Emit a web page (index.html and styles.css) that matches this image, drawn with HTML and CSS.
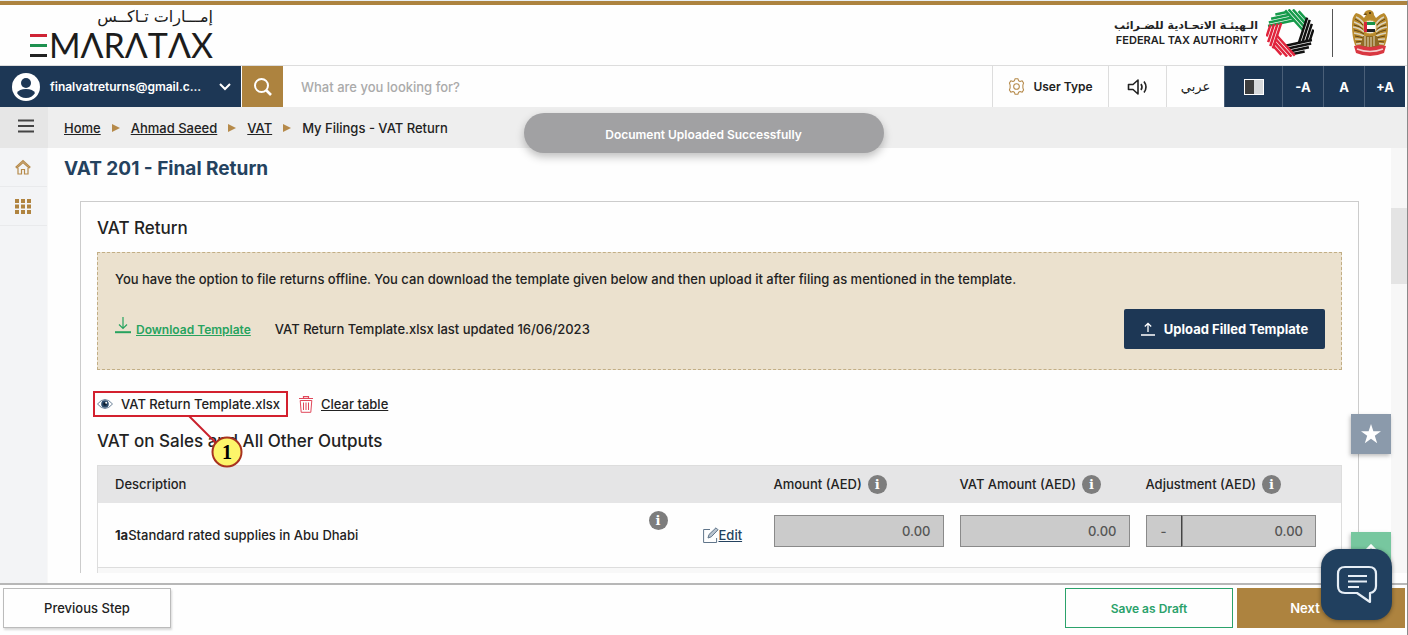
FILE: index.html
```html
<!DOCTYPE html>
<html lang="en">

<head>
    <meta charset="UTF-8">
    <meta name="viewport" content="width=device-width, initial-scale=1.0">
    <title>EmaraTax - VAT 201 Final Return</title>
    <link rel="stylesheet" href="styles.css">
</head>

<body>
    <header class="header">
        <div class="brand">
            <span class="brand-ar" lang="ar" dir="rtl">إمـــارات تـاكــس</span>
            <div class="brand-en">
                <span class="brand-bars"><i class="red"></i><i class="green"></i><i class="black"></i></span>
                <span>MΛRΛTΛX</span>
            </div>
        </div>

        <div class="authority">
            <div class="authority-name">
                <span class="authority-ar" lang="ar" dir="rtl">الـهيئـة الاتحـادية للضـرائب</span>
                <span class="authority-en">FEDERAL TAX AUTHORITY</span>
            </div>
            <svg class="fta-logo" width="48" height="48" viewBox="-24 -24 48 48" aria-hidden="true">
                <defs>
                    <path id="band" d="M-20 -11.5H7M-18.500 -14.700H5.200M-15.500 -17.900H3.400M-10.500 -21.100H1.600" fill="none" stroke-width="2.500"/>
                </defs>
                <g transform="rotate(-12)">
                    <use href="#band" stroke="#169b4b"/>
                    <use href="#band" stroke="#169b4b" transform="rotate(60)"/>
                    <use href="#band" stroke="#111" transform="rotate(120)"/>
                    <use href="#band" stroke="#111" transform="rotate(180)"/>
                    <use href="#band" stroke="#e0243c" transform="rotate(240)"/>
                    <use href="#band" stroke="#e0243c" transform="rotate(300)"/>
                </g>
            </svg>
            <span class="divider"></span>
            <svg class="emblem" width="38" height="48" viewBox="0 0 38 48" aria-hidden="true">
                <path d="M13 5q1-4 6-4q4 1 4 5l2 3q4-4 8-5q4 3 4 12q0 12-3 20l-5 5H9l-5-5Q1 28 1 16Q1 7 5 4q5 1 8 5l2-3z" fill="#b98a2c"/>
                <path d="M5 8q5 2 8 7M3 13q6 2 10 6M2 18q7 1 11 5M3 24q6 1 10 3M4 30q5 0 10 1M5 35q5-1 9 0M33 8q-5 2-8 7M35 13q-6 2-10 6M36 18q-7 1-11 5M35 24q-6 1-10 3M34 30q-5 0-10 1M33 35q-5-1-9 0" fill="none" stroke="#d9d2bd" stroke-width="1.500"/>
                <path d="M4 10q5 2 9 7M3 16q6 1 10 5M3 21q6 1 10 4M4 27q5 1 9 2M5 33q4-1 8 0M34 10q-5 2-9 7M35 16q-6 1-10 5M35 21q-6 1-10 4M34 27q-5 1-9 2M33 33q-4-1-8 0" fill="none" stroke="#5f4619" stroke-width="1"/>
                <path d="M12 27h14l3 11H9z" fill="#8f6b25"/>
                <path d="M14 27v10M17 28v10M20 28v10M23 27v10" stroke="#e5dcc1" stroke-width="1"/>
                <circle cx="19" cy="18" r="7" fill="#efe9da" stroke="#c59a3d"/>
                <path d="M14 13h10v3H14z" fill="#16934a"/>
                <path d="M14 16h10v4H14z" fill="#fff"/>
                <path d="M14 20h10v3H14z" fill="#222"/>
                <path d="M13 13h3v10h-3z" fill="#d6253a"/>
                <path d="M3 37l5-1q11 4 22 0l5 1-2 7q-14 6-28 0z" fill="#d93741"/>
                <path d="M6 40q13 5 26 0" fill="none" stroke="#f4cfcf" stroke-width="1.400"/>
                <circle cx="19" cy="4" r="1" fill="#3b2a0c"/>
                <path d="M15 4l-3 2 4 0z" fill="#6b4c14"/>
            </svg>
        </div>
    </header>

    <div class="toolbar">
        <button type="button" class="account">
            <svg width="28" height="28" viewBox="0 0 28 28" aria-hidden="true">
                <circle cx="14" cy="14" r="14" fill="#fff"/>
                <circle cx="14" cy="10" r="5" fill="#1d3755"/>
                <path d="M5 20q2-4 9-4t9 4q-3 5-9 5t-9-5z" fill="#1d3755"/>
            </svg>
            <span class="account-name">finalvatreturns@gmail.c...</span>
            <svg width="12" height="8" viewBox="0 0 12 8" aria-hidden="true"><path d="M1 1l5 5 5-5" fill="none" stroke="#fff" stroke-width="2"/></svg>
        </button>
        <button type="button" class="search-button" aria-label="Search">
            <svg width="20" height="20" viewBox="0 0 20 20" aria-hidden="true"><circle cx="8.500" cy="8.500" r="6.500" fill="none" stroke="#fff" stroke-width="2"/><path d="M13 13l5 5" stroke="#fff" stroke-width="2.600"/></svg>
        </button>
        <input type="search" class="search-input" placeholder="What are you looking for?" aria-label="What are you looking for?">
        <button type="button" class="tool user-type">
            <svg width="17" height="17" viewBox="0 0 24 24" fill="none" stroke="#b68a4a" stroke-width="1.500" aria-hidden="true">
                <path d="M10 1h4l1 3 2 1 3-1 2 3-1 3v4l1 3-2 3-3-1-2 1-1 3h-4l-1-3-2-1-3 1-2-3 1-3v-4l-1-3 2-3 3 1 2-1z" stroke-linejoin="round"/>
                <circle cx="12" cy="12" r="4"/>
            </svg>
            User Type
        </button>
        <button type="button" class="tool tool-icon" aria-label="Read aloud">
            <svg width="22" height="18" viewBox="0 0 22 18" fill="none" stroke="#222" stroke-width="1.600" aria-hidden="true">
                <path d="M1.500 6.500H6L11 2v14l-5-4.500H1.500z" stroke-linejoin="round"/>
                <path d="M14 6q2 3 0 6M17 3.500q4 5.500 0 11"/>
            </svg>
        </button>
        <button type="button" class="tool tool-icon arabic" lang="ar">عربي</button>
        <button type="button" class="tool tool-icon dark" aria-label="Contrast">
            <svg width="20" height="16" viewBox="0 0 20 16" aria-hidden="true"><path d="M0 0h20v16H0z" fill="#fff"/><path d="M1 1h9v14H1z" fill="#3d3d3d"/><path d="M10 1h9v14h-9z" fill="#d7d9db"/></svg>
        </button>
        <button type="button" class="tool dark size">-A</button>
        <button type="button" class="tool dark size">A</button>
        <button type="button" class="tool dark size">+A</button>
    </div>

    <div class="crumb-bar">
        <button type="button" class="menu-button" aria-label="Menu">
            <svg width="16" height="14" viewBox="0 0 16 14" aria-hidden="true"><path d="M0 1.500h16M0 7h16M0 12.500h16" stroke="#444" stroke-width="2"/></svg>
        </button>
        <nav class="crumbs" aria-label="Breadcrumb">
            <a href="#">Home</a>
            <span class="arrow"></span>
            <a href="#">Ahmad Saeed</a>
            <span class="arrow"></span>
            <a href="#">VAT</a>
            <span class="arrow"></span>
            <span>My Filings - VAT Return</span>
        </nav>
        <div class="toast" role="status">Document Uploaded Successfully</div>
    </div>

    <div class="layout">
        <nav class="sidebar" aria-label="Main">
            <a href="#" aria-label="Home">
                <svg width="16" height="16" viewBox="0 0 16 16" fill="none" stroke="#b68a4a" stroke-width="1.200" aria-hidden="true">
                    <path d="M1 8l7-6.500L15 8l-1 1-6-5.500L2 9z"/>
                    <path d="M3 9v6h3.500v-4.500h3V15H13V9"/>
                </svg>
            </a>
            <a href="#" aria-label="Services">
                <svg width="16" height="16" viewBox="0 0 16 16" fill="#b08440" aria-hidden="true">
                    <path d="M0 1h4v4H0zM6 1h4v4H6zM12 1h4v4h-4zM0 6.500h4v4H0zM6 6.500h4v4H6zM12 6.500h4v4h-4zM0 12h4v4H0zM6 12h4v4H6zM12 12h4v4h-4z"/>
                </svg>
            </a>
        </nav>

        <main class="content">
            <h1>VAT 201 - Final Return</h1>
            <section class="panel">
                <h2>VAT Return</h2>
                <div class="offline">
                    <p>You have the option to file returns offline. You can download the template given below and then upload it after filing as mentioned in the template.</p>
                    <div class="offline-row">
                        <a href="#" class="download">
                            <svg width="16" height="17" viewBox="0 0 16 17" fill="none" stroke="#27a35f" aria-hidden="true"><path d="M8 0v11M4 7.500L8 11.500l4-4" stroke-width="1.200"/><path d="M0 15.200h16" stroke-width="2"/></svg>
                            <span>Download Template</span>
                        </a>
                        <span class="updated">VAT Return Template.xlsx last updated 16/06/2023</span>
                        <button type="button" class="upload">
                            <svg width="14" height="14" viewBox="0 0 14 14" fill="none" stroke="#fff" stroke-width="1.300" aria-hidden="true"><path d="M7 10V1.500M3.800 4.500L7 1.300l3.200 3.200M0 13h14"/></svg>
                            Upload Filled Template
                        </button>
                    </div>
                </div>

                <div class="file-row">
                    <a href="#" class="file">
                        <svg width="16" height="12" viewBox="0 0 16 12" aria-hidden="true"><path d="M.5 6Q8-3 15.500 6Q8 15 .5 6z" fill="#fff" stroke="#6d8299"/><circle cx="8" cy="6" r="3.800" fill="#2b4a6b"/><circle cx="8" cy="6" r="1.800" fill="#0d1d2e"/><circle cx="9.200" cy="4.800" r="1" fill="#fff"/></svg>
                        VAT Return Template.xlsx
                        <svg class="marker" width="64" height="54" viewBox="0 0 64 54" aria-hidden="true">
                            <path d="M4 1l30 30" stroke="#c9202c" stroke-width="2"/>
                            <circle cx="42" cy="37" r="14.500" fill="#fdf56a" stroke="#a8321f" stroke-width="2"/>
                            <text x="42" y="44" text-anchor="middle" class="marker-number">1</text>
                        </svg>
                    </a>
                    <a href="#" class="clear">
                        <svg width="14" height="17" viewBox="0 0 14 17" fill="none" stroke="#e0475a" aria-hidden="true"><path d="M0 2.500h14M4.500 2V.6h5V2" stroke-width="1.200"/><path d="M1.200 4.500h11.600l-1 11.800H2.200zM4.500 6.500v7.500M7 6.500v7.500M9.500 6.500v7.500"/></svg>
                        <span>Clear table</span>
                    </a>
                </div>

                <h2>VAT on Sales and All Other Outputs</h2>
                <table class="returns">
                    <thead>
                        <tr>
                            <th scope="col">Description</th>
                            <th class="col-info"></th>
                            <th class="col-edit"></th>
                            <th scope="col" class="col-amount"><span class="head">Amount (AED) <button type="button" class="info" aria-label="About amount">i</button></span></th>
                            <th scope="col" class="col-amount"><span class="head">VAT Amount (AED) <button type="button" class="info" aria-label="About VAT amount">i</button></span></th>
                            <th scope="col" class="col-adjust"><span class="head">Adjustment (AED) <button type="button" class="info" aria-label="About adjustment">i</button></span></th>
                        </tr>
                    </thead>
                    <tbody>
                        <tr>
                            <td><div class="description"><b>1a</b>Standard rated supplies in Abu Dhabi</div></td>
                            <td class="cell-info"><button type="button" class="info" aria-label="About this row">i</button></td>
                            <td>
                                <a href="#" class="edit">
                                    <svg width="16" height="16" viewBox="0 0 16 16" fill="none" stroke="#60758a" aria-hidden="true"><path d="M7 2.500H.6v13h13V11"/><path d="M5 11l1-3.500L13 .8l2 2L8.300 9.800z" fill="#b9c3cd"/></svg><span>Edit</span>
                                </a>
                            </td>
                            <td class="cell-amount"><input type="text" class="amount" value="0.00" aria-label="Amount (AED)" readonly></td>
                            <td class="cell-amount"><input type="text" class="amount" value="0.00" aria-label="VAT Amount (AED)" readonly></td>
                            <td class="cell-amount cell-adjust">
                                <div class="adjust">
                                    <input type="text" class="amount sign" value="-" aria-label="Adjustment sign" readonly>
                                    <input type="text" class="amount" value="0.00" aria-label="Adjustment (AED)" readonly>
                                </div>
                            </td>
                        </tr>
                        <tr class="next-row"><td colspan="6"></td></tr>
                    </tbody>
                </table>
            </section>
        </main>

        <div class="scroll-track"><div class="scroll-thumb"></div></div>
    </div>

    <footer class="footer">
        <button type="button" class="step previous">Previous Step</button>
        <button type="button" class="step draft">Save as Draft</button>
        <button type="button" class="step next">Next Step</button>
    </footer>

    <button type="button" class="float favourite" aria-label="Favourites">
        <svg width="20" height="20" viewBox="0 0 20 20" aria-hidden="true"><path d="M10 0l2.400 7.200H20l-6.200 4.500 2.400 7.500L10 14.700l-6.200 4.500 2.400-7.500L0 7.200h7.600z" fill="#fff"/></svg>
    </button>
    <button type="button" class="float to-top" aria-label="Back to top">
        <svg width="14" height="9" viewBox="0 0 14 9" aria-hidden="true"><path d="M1 8l6-6 6 6" fill="none" stroke="#fff" stroke-width="3"/></svg>
    </button>
    <button type="button" class="chat" aria-label="Chat">
        <svg width="42" height="40" viewBox="0 0 42 40" fill="none" stroke="#e6eef6" stroke-width="2.200" stroke-linejoin="round" aria-hidden="true">
            <path d="M9 2h24q7 0 7 7v12q0 6-6 7v9l-13-9H9q-7 0-7-7V9q0-7 7-7z"/>
            <path d="M12 11h19M12 16.500h19M12 22h11"/>
        </svg>
    </button>
</body>

</html>
```
FILE: styles.css
```css
* {
    box-sizing: border-box;
}

body {
    font-family: Inter, "Open Sans", sans-serif;
    font-size: 13px;
    font-weight: 500;
    color: #222;
    background-color: #fefefe;
    margin: 0;
    height: 100vh;
    display: flex;
    flex-direction: column;
    position: relative;
    overflow: hidden;
    border-top: 1px solid #e8f0f5;
    border-right: 1px solid #8a8a8a;
}

button,
input {
    font: inherit;
    color: inherit;
    margin: 0;
}

button {
    border: none;
    padding: 0;
    background: none;
    cursor: pointer;
}

a {
    color: inherit;
}

svg {
    flex: none;
}

/* Header */
.header {
    border-top: 4px solid #ad833f;
    height: 64px;
    flex: none;
    display: flex;
    justify-content: space-between;
    padding: 0 18px 0 30px;
}

.brand {
    display: flex;
    flex-direction: column;
    align-items: flex-end;
    color: #1c1c1c;
}

.brand-ar {
    font-family: "DejaVu Sans", sans-serif;
    font-size: 16px;
    font-weight: 400;
    line-height: 24px;
}

.brand-en {
    display: flex;
    align-items: center;
    gap: 2px;
    font-family: Lato, sans-serif;
    font-size: 34px;
    font-weight: 400;
    line-height: 32px;
}

.brand-bars {
    display: flex;
    flex-direction: column;
    gap: 7px;
}

.brand-bars i {
    width: 17px;
    height: 3px;
}

.red {
    background: #cf2436;
}

.green {
    background: #1e9150;
}

.black {
    background: #222;
}

.authority {
    display: flex;
    align-items: center;
    padding-bottom: 4px;
}

.authority-name {
    display: flex;
    flex-direction: column;
    align-items: flex-end;
}

.authority-ar {
    font-family: "DejaVu Sans", sans-serif;
    font-size: 11px;
    font-weight: 700;
    line-height: 14px;
}

.authority-en {
    font-size: 11px;
    font-weight: 600;
    line-height: 14px;
}

.fta-logo {
    margin-left: 8px;
}

.divider {
    width: 1px;
    height: 48px;
    background: #555;
    margin: 0 18px;
}

/* Toolbar */
.toolbar {
    display: flex;
    flex: none;
    height: 42px;
    border-top: 1px solid #ddd;
    padding-right: 2px;
}

.account {
    width: 241px;
    background: #1d3755;
    color: #fff;
    display: flex;
    align-items: center;
    gap: 10px;
    padding: 0 10px 0 12px;
}

.account-name {
    flex: 1;
    text-align: left;
    font-size: 12px;
    font-weight: 600;
}

.search-button {
    width: 41px;
    margin-left: 1px;
    background: #ad833f;
    display: flex;
    align-items: center;
    justify-content: center;
}

.search-input {
    flex: 1;
    min-width: 0;
    border: none;
    background: none;
    padding: 0 18px;
    outline-color: #ad833f;
}

.search-input::placeholder {
    color: #aaa;
    opacity: 1;
}

.tool {
    display: flex;
    align-items: center;
    justify-content: center;
    gap: 8px;
    border-left: 1px solid #ddd;
}

.user-type {
    width: 116px;
    font-size: 12px;
    font-weight: 600;
}

.tool-icon {
    width: 58px;
}

.arabic {
    font-family: "DejaVu Sans", sans-serif;
}

.dark {
    background: #1d3755;
    color: #fff;
    border-left-color: #4a5f78;
    font-weight: 700;
}

.size {
    width: 41px;
}

/* Breadcrumb */
.crumb-bar {
    display: flex;
    flex: none;
    height: 41px;
    background: #eee;
    position: relative;
}

.menu-button {
    width: 48px;
    background: #e6e6e6;
    padding-left: 4px;
}

.crumbs {
    display: flex;
    align-items: center;
    gap: 11px;
    padding-left: 16px;
}

.arrow {
    border-left: 8px solid #b68a4a;
    border-top: 4px solid transparent;
    border-bottom: 4px solid transparent;
}

.toast {
    position: absolute;
    z-index: 2;
    top: 6px;
    left: 50%;
    transform: translateX(-50%);
    width: 360px;
    height: 40px;
    line-height: 44px;
    border-radius: 20px;
    background: #a1a1a3;
    color: #fff;
    text-align: center;
    font-size: 12px;
    font-weight: 600;
    box-shadow: 0 4px 8px rgba(0, 0, 0, 0.25);
}

/* Main area */
.layout {
    flex: 1;
    min-height: 0;
    display: flex;
}

.sidebar {
    width: 48px;
    background: #f3f4f6;
    border-right: 1px solid #f8f8f8;
}

.sidebar a {
    display: flex;
    align-items: center;
    justify-content: center;
    height: 39px;
    padding-right: 2px;
    border-bottom: 1px solid #e9eaec;
}

.content {
    flex: 1;
    min-width: 0;
    overflow: hidden;
    margin-bottom: 10px;
    padding: 9px 32px 0 16px;
}

h1 {
    font-size: 19px;
    font-weight: 700;
    line-height: 24px;
    color: #24425f;
    margin: 0 0 20px;
}

.panel {
    border: 1px solid #ccc;
    margin-left: 16px;
    padding: 14px 16px;
    min-height: 600px;
}

h2 {
    font-size: 17px;
    font-weight: 500;
    line-height: 24px;
    margin: 0 0 12px;
}

.offline {
    background: #ebe1ce;
    border: 1px dashed #c2ae85;
    padding: 16px 16px 20px 17px;
}

.offline p {
    margin: 0;
    line-height: 20px;
}

.offline-row {
    display: flex;
    align-items: center;
    margin-top: 20px;
}

.download {
    display: flex;
    align-items: center;
    gap: 5px;
    color: #27a35f;
    text-decoration: none;
    font-size: 12px;
    font-weight: 600;
}

.download span,
.clear span,
.edit span {
    text-decoration: underline;
}

.download svg {
    margin-bottom: 8px;
}

.updated {
    margin-left: 24px;
}

.upload {
    margin-left: auto;
    display: flex;
    align-items: center;
    justify-content: center;
    gap: 9px;
    width: 201px;
    height: 40px;
    border-radius: 2px;
    background: #1d3755;
    color: #fff;
    font-weight: 700;
}

.file-row {
    display: flex;
    gap: 11px;
    margin: 21px 0 12px -4px;
}

.file,
.clear {
    display: flex;
    align-items: center;
    gap: 8px;
    height: 26px;
    text-decoration: none;
}

.file {
    position: relative;
    width: 195px;
    padding-left: 2px;
    border: 2px solid #d3202e;
}

.marker {
    position: absolute;
    top: 22px;
    left: 90px;
}

.marker-number {
    font-family: "Liberation Serif", serif;
    font-size: 20px;
    font-weight: 700;
}

/* Returns table */
.returns {
    width: 100%;
    table-layout: fixed;
    border-collapse: collapse;
    border: 1px solid #ddd;
}

.returns th {
    height: 37px;
    padding: 0;
    background: #e5e5e6;
    text-align: left;
    font-weight: 500;
}

.returns td {
    height: 65px;
    padding: 0 16px 0 0;
    border-bottom: 1px solid #ddd;
}

.returns th:first-child,
.returns td:first-child {
    padding-left: 17px;
}

.col-info {
    width: 54px;
}

.col-edit {
    width: 71px;
}

.col-amount {
    width: 186px;
}

.col-adjust {
    width: 196px;
}

.head {
    display: flex;
    align-items: center;
    gap: 6px;
}

.info {
    width: 19px;
    height: 19px;
    border-radius: 50%;
    background: #7d7d7d;
    color: #fff;
    font-family: "DejaVu Serif", serif;
    font-size: 13px;
    font-weight: 700;
    line-height: 19px;
}

.returns .cell-info {
    vertical-align: top;
    padding-top: 8px;
}

.returns .cell-amount {
    padding-bottom: 8px;
}

.returns .cell-adjust {
    padding-right: 25px;
}

.returns .next-row td {
    background: #f8f8f8;
}

.edit {
    display: flex;
    align-items: flex-end;
    color: #24425f;
    text-decoration: none;
}

.amount {
    display: block;
    width: 100%;
    height: 32px;
    border: 1px solid #8a8a8a;
    background: #cbcbcb;
    color: #555;
    padding: 0 12px;
    text-align: right;
}

.adjust {
    display: flex;
}

.sign {
    width: 36px;
    flex: none;
    border-right-color: #444;
    text-align: center;
}

/* Footer */
.footer {
    flex: none;
    display: flex;
    gap: 4px;
    height: 52px;
    border-top: 2px solid #b7b7b7;
    padding: 3px 2px 7px 3px;
    background: #fefefe;
}

.step {
    width: 168px;
    border: 1px solid #bbb;
}

.previous {
    margin-right: auto;
    box-shadow: 1px 2px 2px rgba(0, 0, 0, 0.15);
}

.draft {
    border-color: #2ba26b;
    color: #2ba26b;
    font-size: 12px;
    font-weight: 600;
}

.next {
    border-color: #ad833f;
    background: #ad833f;
    color: #fff;
    font-weight: 600;
}

/* Floating buttons */
.float {
    position: absolute;
    right: 16px;
    width: 40px;
    height: 40px;
    box-shadow: -1px 2px 4px rgba(0, 0, 0, 0.25);
    display: flex;
    align-items: center;
    justify-content: center;
}

.favourite {
    bottom: 181px;
    background: #8b9aab;
}

.to-top {
    bottom: 63px;
    align-items: flex-start;
    padding-top: 12px;
    background: #77c79f;
}

.chat {
    position: absolute;
    right: 15px;
    bottom: 15px;
    width: 71px;
    height: 71px;
    border-radius: 18px;
    background: #21405f;
    box-shadow: 0 1px 4px rgba(0, 0, 0, 0.4);
    display: flex;
    align-items: center;
    justify-content: center;
}

.scroll-track {
    width: 16px;
    background: #f7f7f7;
    padding-top: 60px;
    margin-bottom: 10px;
}

.scroll-thumb {
    height: 76px;
    background: #e4e4e4;
}
```
